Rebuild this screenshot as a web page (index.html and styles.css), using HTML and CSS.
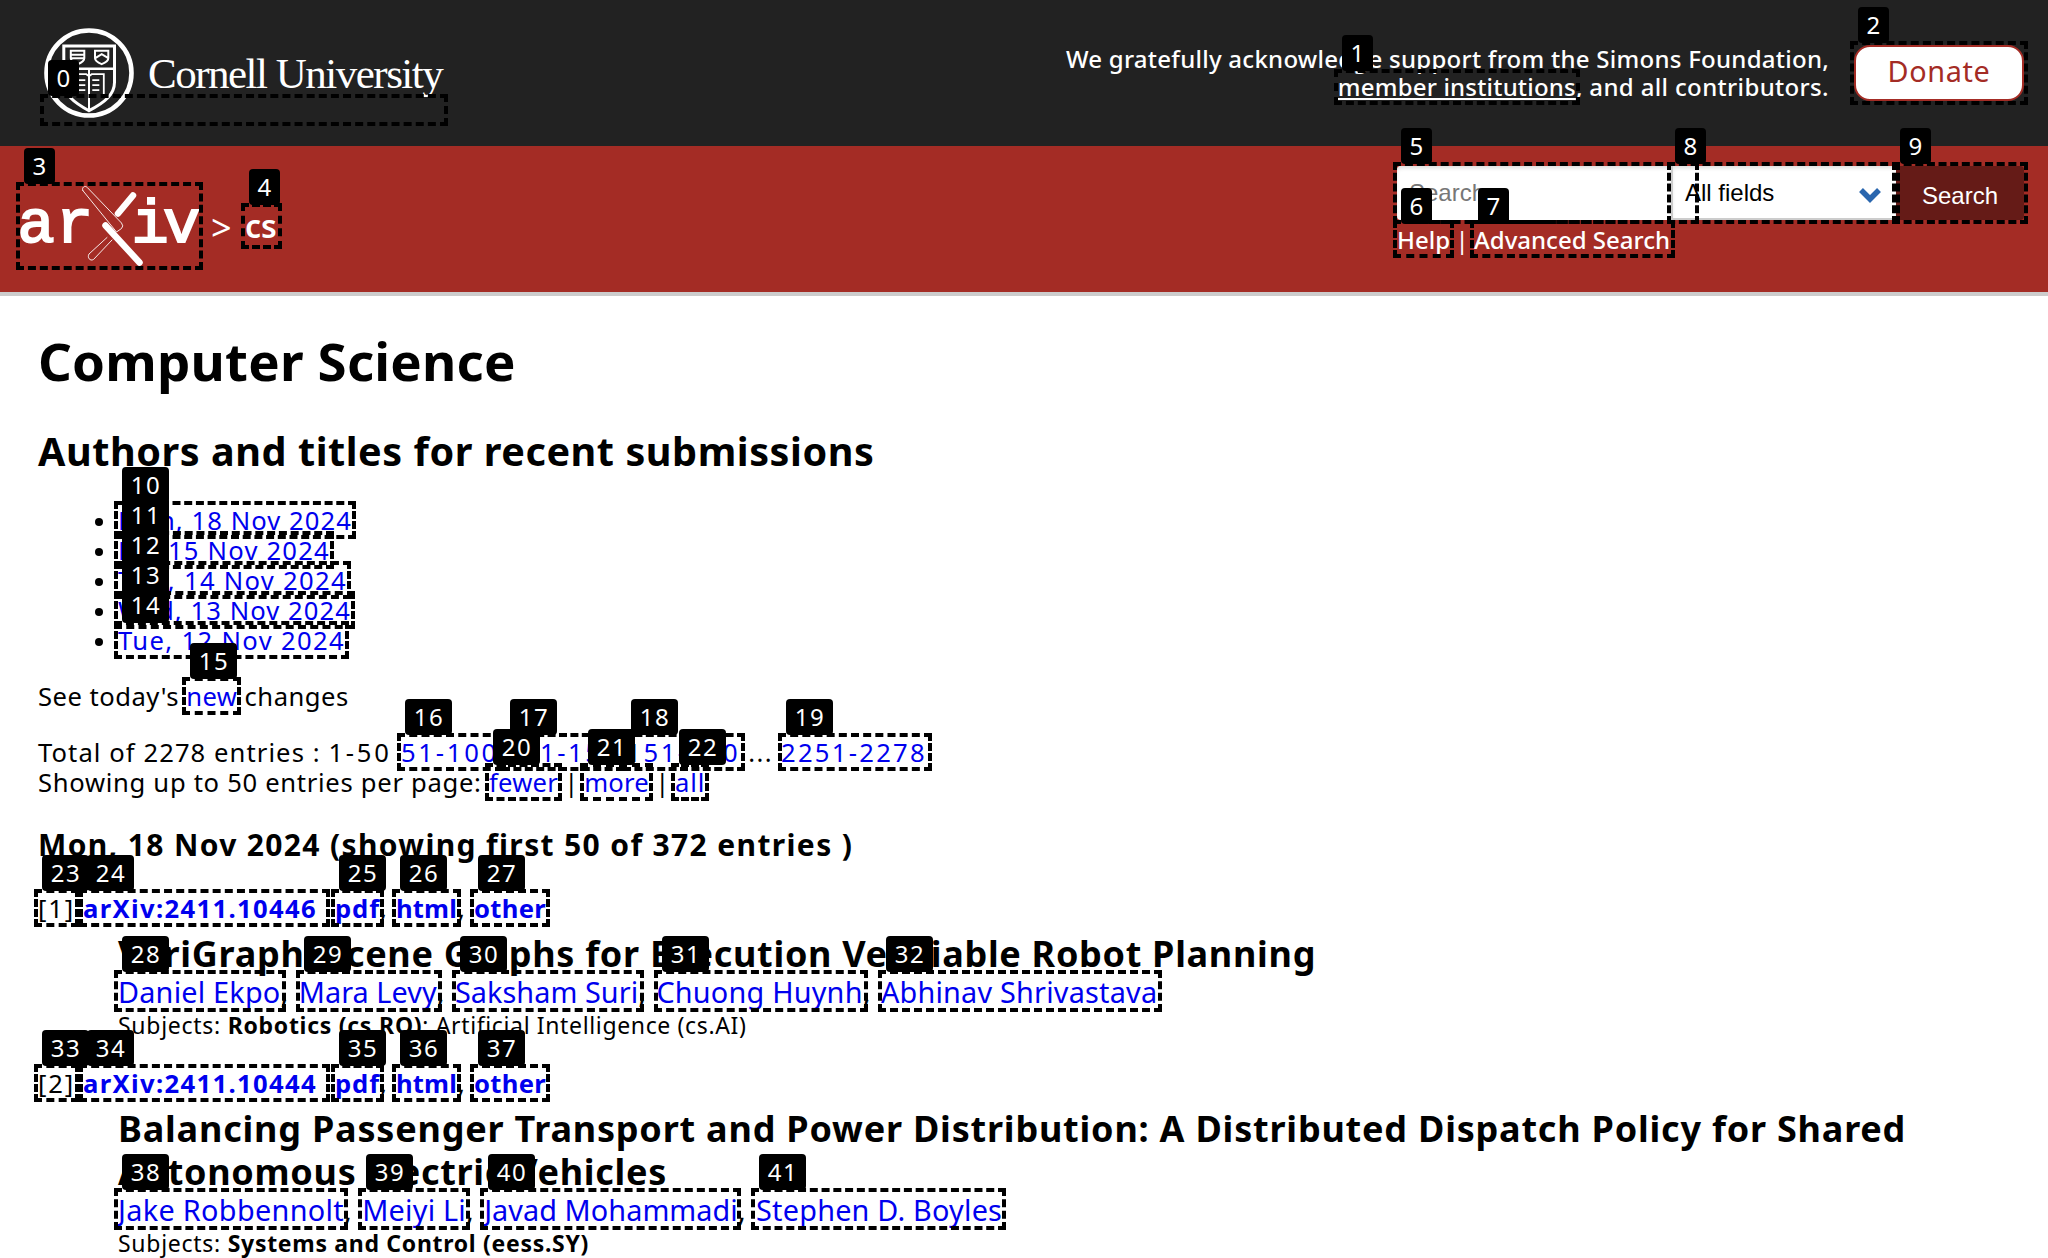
FILE: index.html
```html
<!DOCTYPE html>
<html lang="en">
<head>
<meta charset="utf-8">
<title>Computer Science</title>
<link rel="stylesheet" href="styles.css">
</head>
<body>
<header class="top">
  <a class="cornell" href="#">
    <svg class="seal" viewBox="43.7 27.8 90 90" fill="none" stroke="#fff">
      <circle cx="88.7" cy="72.8" r="42.5" stroke-width="4.6"/>
      <path stroke-width="3" d="M63.5 45.8H114.2V82C114.2 94 105 102 88.7 110.500C73 102 63.5 94 63.5 82Z"/>
      <path stroke-width="2.6" d="M63.5 68.5H114.2"/>
      <path stroke-width="2" d="M88.7 69V110M70.5 50.5H84V58C84 61 81 62.5 77.3 64C73.5 62.5 70.5 61 70.5 58ZM70.5 54.5H84M70.5 58H84M94.7 50.5H108V58C108 61 105 62.5 101.4 64C98 62.5 94.7 61 94.7 58ZM95 58L101.4 54L108 58"/>
      <path stroke-width="1.8" d="M73 94V74H86L88.7 76L91.4 74H103.5V94M76 80H85M76 85H85M76 90H85M92 80H99M92 85H99M92 90H99"/>
    </svg>
    <span class="cornell-name">Cornell University</span>
  </a>
  <div class="support">
    <p class="ack"><span class="ack-1">We gratefully acknowledge support from the Simons Foundation,</span><br><a class="member" href="#">member institutions</a><span class="ack-2">, and all contributors.</span></p>
    <a class="donate" href="#">Donate</a>
  </div>
</header>
<div class="brand">
  <div class="crumbs">
    <svg class="arxiv" viewBox="20 186 180 80">
      <g class="arxiv-letters"><text x="17.5" y="242">a</text><text x="56" y="242">r</text><text x="131.5" y="242">i</text><text x="163" y="242">v</text></g>
      <g fill="none" stroke="#fff" stroke-linecap="round">
        <path stroke-width="6.5" d="M133 195.5L118 213.5"/>
        <path stroke="#a42c25" fill="#a42c25" stroke-width="2" d="M83 191L115 229L121 226L87 187Z"/>
        <path stroke-width=".9" d="M82.8 190.5C81.3 187.5 85 185 87.3 187.5L121.5 223Q124 226 121.5 228.5L116.5 232L82.8 190.5M107 237.5L89 254C87 257.5 90 261.5 93.5 259.5L112 240"/>
        <path stroke-width="6.5" d="M105.5 225.5L139.5 262.5"/>
      </g>
    </svg>
    <span class="gt">&gt;</span>
    <a class="cs" href="#">cs</a>
  </div>
  <form class="search">
    <div class="field"><span>Search...</span></div>
    <div class="select"><span>All fields</span>
      <svg class="chev" viewBox="0 0 24 16"><path d="M3 3L12 12L21 3" fill="none" stroke="#2a66ae" stroke-width="5.500"/></svg>
    </div>
    <div class="go">Search</div>
    <div class="links"><a href="#">Help</a><i>|</i><a href="#">Advanced Search</a></div>
  </form>
</div>
<main>
  <h1>Computer Science</h1>
  <h2>Authors and titles for recent submissions</h2>
  <ul>
    <li><a class="d-mon" href="#">Mon, 18 Nov 2024</a></li>
    <li><a class="d-fri" href="#">Fri, 15 Nov 2024</a></li>
    <li><a class="d-thu" href="#">Thu, 14 Nov 2024</a></li>
    <li><a class="d-mon" href="#">Wed, 13 Nov 2024</a></li>
    <li><a class="d-tue" href="#">Tue, 12 Nov 2024</a></li>
  </ul>
  <p class="see">See today's <a href="#">new</a> changes</p>
  <div class="paging">
    <p class="total"><span>Total of 2278 entries : </span><span class="p-1">1-50 </span><a class="p-51" href="#">51-100</a><s> </s><a class="p-101" href="#">101-150</a><s> </s><a class="p-101" href="#">151-200</a><span class="dots"> ... </span><a class="p-last" href="#">2251-2278</a></p>
    <p class="per"><span>Showing up to 50 entries per page: </span><a href="#">fewer</a><i> | </i><a href="#">more</a><i> | </i><a class="all" href="#">all</a></p>
  </div>
  <h3>Mon, 18 Nov 2024 (showing first 50 of 372 entries )</h3>
  <article>
    <p class="ids"><span class="num">[1]</span><a class="id" href="#">arXiv:2411.10446</a><a class="pdf" href="#">pdf</a><i>,</i><a class="html" href="#">html</a><i>,</i><a class="other" href="#">other</a></p>
    <div class="meta">
      <h4 class="t-1">VeriGraph: Scene Graphs for Execution Verifiable Robot Planning</h4>
      <p class="authors"><a href="#">Daniel Ekpo</a><i>, </i><a href="#" class="tight">Mara Levy</a><i>, </i><a href="#" class="tight">Saksham Suri</a><i>, </i><a href="#">Chuong Huynh</a><i>, </i><a href="#">Abhinav Shrivastava</a></p>
      <p class="subjects">Subjects: <b>Robotics (cs.RO)</b><span>; Artificial Intelligence (cs.AI)</span></p>
    </div>
  </article>
  <article>
    <p class="ids"><span class="num">[2]</span><a class="id" href="#">arXiv:2411.10444</a><a class="pdf" href="#">pdf</a><i>,</i><a class="html" href="#">html</a><i>,</i><a class="other" href="#">other</a></p>
    <div class="meta">
      <h4 class="t-2">Balancing Passenger Transport and Power Distribution: A Distributed Dispatch Policy for Shared<br><span>Autonomous Electric Vehicles</span></h4>
      <p class="authors"><a href="#" class="wide">Jake Robbennolt</a><i>, </i><a href="#">Meiyi Li</a><i>, </i><a href="#" class="tight">Javad Mohammadi</a><i>, </i><a href="#">Stephen D. Boyles</a></p>
      <p class="subjects">Subjects: <b>Systems and Control (eess.SY)</b></p>
    </div>
  </article>
</main>
<div class="marks" id="marks"></div>
<script src="marks.js"></script>
</body>
</html>
```
FILE: styles.css
```css
* { box-sizing: border-box; }
body { margin: 0; width: 2048px; height: 1258px; overflow: hidden; position: relative; background: #fff; color: #000; font-family: "Noto Sans", "Open Sans", sans-serif; font-size: 25.6px; line-height: 30px; }
p, h1, h2, h3, h4, ul { margin: 0; padding: 0; }
i { font-style: normal; }
s { text-decoration: none; }
a { color: #0000ee; text-decoration: none; }

.top { height: 146px; background: #222; display: flex; justify-content: space-between; align-items: flex-start; padding: 0 24px 0 44px; color: #fff; }
.cornell { display: flex; color: #fff; padding-top: 28px; }
.seal { width: 90px; height: 90px; }
.cornell-name { margin: 20px 0 0 14px; font: 43px/52px "Liberation Serif", serif; letter-spacing: -1.5px; white-space: nowrap; }
.support { display: flex; padding-top: 45px; gap: 25px; }
.ack { font-size: 24px; line-height: 28px; font-weight: 500; text-align: right; white-space: nowrap; }
.ack-1 { letter-spacing: .26px; }
.ack-2 { letter-spacing: .35px; }
.member { color: #fff; letter-spacing: .19px; text-decoration: underline; text-decoration-thickness: 2px; text-underline-offset: 2px; }
.donate { width: 170px; height: 56px; border: 2px solid #a42c25; border-radius: 16px; background: #fff; color: #a42c25; font-size: 28.8px; line-height: 47px; letter-spacing: .66px; text-align: center; }

.brand { height: 150px; background: #a42c25; border-bottom: 4px solid #ccc; display: flex; justify-content: space-between; align-items: flex-start; padding: 20px 24px 0 20px; color: #fff; }
.crumbs { display: flex; padding-top: 20px; align-items: flex-start; }
.arxiv { width: 180px; height: 80px; overflow: visible; }
.arxiv-letters { font-family: "Liberation Mono", monospace; font-size: 62px; fill: #fff; stroke: #fff; stroke-width: 2px; }
.gt { font-size: 36px; line-height: 40px; margin: 22px 0 0 11px; width: 24px; }
.cs { color: #fff; font-size: 32px; font-weight: 600; line-height: 40px; margin: 20px 0 0 10px; }
.search { display: grid; grid-template-columns: 274px 225px 128px; grid-template-rows: 54px 38px; font-family: "Liberation Sans", sans-serif; font-size: 24px; line-height: 54px; }
.field { background: #fff; border-radius: 4px 0 0 4px; color: #777; padding-left: 12px; box-shadow: inset 0 3px 4px -1px #ddd; }
.select { background: #fff; color: #000; border: solid #ccc; border-width: 0 0 2px 2px; padding: 0 14px 0 12px; display: flex; justify-content: space-between; box-shadow: inset 0 3px 4px -1px #ddd; }
.chev { width: 24px; height: 16px; margin-top: 21px; }
.go { background: #651b17; border-radius: 0 4px 4px 0; color: #fff; text-align: center; line-height: 59px; }
.links { grid-column: 1 / 4; font-family: "Noto Sans", sans-serif; font-weight: 500; line-height: 40px; display: flex; }
.links a { color: #fff; }
.links i { width: 24px; text-align: center; font-weight: 400; }

main { padding: 35px 38px 0; display: flex; flex-direction: column; }
h1 { font-size: 52.8px; line-height: 60px; letter-spacing: .2px; }
h2 { font-size: 39.6px; line-height: 50px; letter-spacing: .55px; margin-top: 35px; }
main > ul { list-style: none; margin-top: 30px; padding-left: 57px; }
li { display: flex; align-items: center; gap: 15px; height: 30px; }
li::before { content: ""; width: 8px; height: 8px; border-radius: 50%; background: #000; margin-top: 2px; }
.d-mon { letter-spacing: 1.09px; }
.d-fri { letter-spacing: 1.21px; }
.d-thu { letter-spacing: 1.31px; }
.d-tue { letter-spacing: 1.36px; }
.see { margin-top: 26px; letter-spacing: .48px; }
.paging { margin-top: 26px; }
.paging p { white-space: pre; }
.total span { letter-spacing: 1.08px; }
.total .p-1 { letter-spacing: 2.75px; }
.total .dots { letter-spacing: 1.37px; }
.p-51 { letter-spacing: 2.75px; }
.p-101 { letter-spacing: 2.56px; }
.p-last { letter-spacing: 2.29px; }
.per span { letter-spacing: .7px; }
.per a { letter-spacing: .25px; }
.per i { letter-spacing: -.47px; }
.per .all { letter-spacing: .83px; }
h3 { margin-top: 29px; font-size: 30px; line-height: 36px; letter-spacing: 1.36px; }
article { margin-top: 31px; }
article + article { margin-top: 29px; }
.ids { display: flex; }
.ids a { font-weight: 700; }
.ids i { width: 16px; }
.num { width: 45px; letter-spacing: 1.8px; }
.id { width: 252px; letter-spacing: 1.35px; }
.pdf { width: 45px; letter-spacing: .92px; }
.html { width: 62px; letter-spacing: .15px; }
.other { letter-spacing: .3px; }
.meta { padding: 8px 0 0 80px; }
h4 { font-size: 36px; line-height: 43px; white-space: nowrap; }
.t-1 { letter-spacing: .7px; }
.t-2 { letter-spacing: .79px; }
.t-2 span { letter-spacing: .7px; }
.authors { font-size: 28.8px; line-height: 34px; letter-spacing: .22px; white-space: pre; }
.authors i { letter-spacing: 1.5px; }
.authors .tight { letter-spacing: .07px; }
.authors .wide { letter-spacing: .34px; }
.subjects { font-size: 23px; letter-spacing: .73px; margin-top: 1px; }
.subjects b { letter-spacing: .7px; }
.subjects span { letter-spacing: .64px; }

/* Numbered link hints drawn over the page */
.marks { position: absolute; inset: 0; }
.box { position: absolute; border: 4px dashed #000; }
.badge { position: absolute; height: 36px; border-radius: 4px; background: #000; color: #fff; font-size: 24px; line-height: 36px; text-align: center; letter-spacing: 1.47px; padding-left: 1px; }
```
FILE: marks.js
```js
// Each hint: left, top, right, bottom of the outlined link.
const links = [
  [40, 94, 448, 126], [1334, 69, 1580, 105], [1850, 41, 2028, 105], [16, 182, 203, 270], [241, 203, 282, 249],
  [1393, 162, 1699, 224], [1393, 220, 1454, 258], [1470, 220, 1675, 258], [1667, 162, 1900, 224], [1892, 162, 2028, 224],
  [114, 501, 356, 539], [114, 531, 334, 569], [114, 561, 351, 599], [114, 591, 355, 629], [114, 621, 349, 659],
  [182, 677, 241, 715], [397, 733, 503, 771], [502, 733, 624, 771], [623, 733, 745, 771], [778, 733, 932, 771],
  [485, 763, 562, 801], [580, 763, 653, 801], [671, 763, 709, 801],
  [34, 889, 79, 927], [79, 889, 330, 927], [331, 889, 384, 927], [392, 889, 461, 927], [470, 889, 550, 927],
  [114, 970, 286, 1012], [296, 970, 442, 1012], [452, 970, 644, 1012], [654, 970, 868, 1012], [878, 970, 1162, 1012],
  [34, 1064, 79, 1102], [79, 1064, 330, 1102], [331, 1064, 384, 1102], [392, 1064, 461, 1102], [470, 1064, 550, 1102],
  [114, 1188, 348, 1230], [358, 1188, 470, 1230], [480, 1188, 741, 1230], [751, 1188, 1006, 1230]
];
const layer = document.getElementById('marks');
links.forEach(([l, t, r, b], n) => {
  const box = document.createElement('div');
  box.className = 'box';
  box.style.cssText = `left:${l}px;top:${t}px;width:${r - l}px;height:${b - t}px`;
  const badge = document.createElement('div');
  badge.className = 'badge';
  badge.textContent = n;
  const top = t - (n === 6 || n === 7 ? 32 : 34);
  badge.style.cssText = `left:${l + 8}px;top:${top}px;width:${n < 10 ? 31 : 47}px`;
  layer.append(box, badge);
});
```
